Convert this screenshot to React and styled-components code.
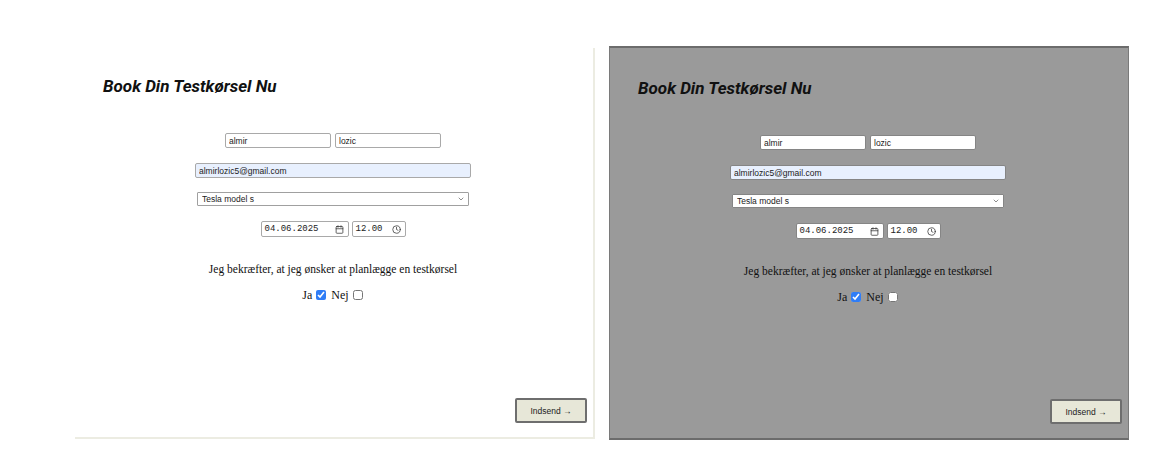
import React from "react";
import styled, { createGlobalStyle } from "styled-components";
import { ChevronDown, Calendar, Clock } from "lucide-react";

const GlobalStyle = createGlobalStyle`
  body {
    margin: 0;
    background: #ffffff;
    font-family: "Liberation Serif", serif;
  }
`;

const Page = styled.div`
  display: flex;
  gap: 16px;
  padding: 46px 0 0 73px;
  align-items: flex-start;
`;

const Panel = styled.div`
  box-sizing: border-box;
  width: 520px;
  height: ${(p) => (p.$dark ? "394px" : "391px")};
  display: flex;
  flex-direction: column;
  padding: ${(p) => (p.$dark ? "30px 6px 14px 28px" : "30px 6px 14px 30px")};
  background: ${(p) => (p.$dark ? "#9a9a9a" : "#ffffff")};
  border: ${(p) => (p.$dark ? "1px solid #7a7a7a" : "none")};
  border-top: ${(p) => (p.$dark ? "2px solid #6c6c6c" : "none")};
  border-bottom: ${(p) => (p.$dark ? "2px solid #6c6c6c" : "none")};
  box-shadow: ${(p) => (p.$dark ? "none" : "2px 2px 0 #ecece2")};
`;

const Title = styled.h2`
  margin: 0;
  font-family: Roboto, "Liberation Sans", sans-serif;
  font-style: italic;
  font-weight: 700;
  font-size: 17px;
  line-height: 20px;
  color: #111;
`;

const Form = styled.div`
  display: flex;
  flex-direction: column;
  align-items: center;
  margin: 37px 24px 0 0;
`;

const Row = styled.div`
  display: flex;
  gap: ${(p) => p.$gap || 4}px;
  margin-bottom: ${(p) => p.$mb || 0}px;
`;

const Field = styled.input`
  box-sizing: border-box;
  display: block;
  width: ${(p) => p.$w}px;
  height: 15px;
  padding: 0 3px;
  font-family: "Liberation Sans", Arial, sans-serif;
  font-size: 8.5px;
  color: #222;
  background: ${(p) => (p.$filled ? "#e8f0fe" : "#fff")};
  border: 1px solid ${(p) => (p.$dark ? "#858585" : "#a9a9a9")};
  border-radius: 2px;
  outline: none;
`;

const SelectWrap = styled.div`
  position: relative;
  width: 272px;
  height: 14px;
`;

const Select = styled.select`
  box-sizing: border-box;
  display: block;
  width: 100%;
  height: 14px;
  padding: 0 4px;
  appearance: none;
  font-family: "Liberation Sans", Arial, sans-serif;
  font-size: 8.5px;
  line-height: 12px;
  color: #222;
  background: #fff;
  border: 1px solid ${(p) => (p.$dark ? "#858585" : "#a0a0a0")};
  border-radius: 1px;
  outline: none;
`;

const Chevron = styled(ChevronDown)`
  position: absolute;
  right: 4px;
  top: 3px;
  display: block;
  width: 8px;
  height: 8px;
  color: #555;
  pointer-events: none;
`;

const PickerBox = styled.div`
  box-sizing: border-box;
  display: flex;
  align-items: center;
  justify-content: space-between;
  width: ${(p) => p.$w}px;
  height: 16px;
  padding: 0 4px 0 3px;
  font-family: "Liberation Mono", "DejaVu Sans Mono", monospace;
  font-size: 9px;
  color: #222;
  background: #fff;
  border: 1px solid ${(p) => (p.$dark ? "#858585" : "#a9a9a9")};
  border-radius: 2px;

  svg {
    display: block;
    width: 9px;
    height: 9px;
    color: #333;
  }
`;

const Confirm = styled.p`
  margin: 25px 0 0;
  font-size: 11.5px;
  line-height: 14px;
  color: #111;
`;

const Choices = styled.div`
  display: flex;
  align-items: center;
  gap: 4px;
  margin-top: 12px;
  font-size: 12px;
  line-height: 14px;
  color: #111;
`;

const Check = styled.input`
  width: 10px;
  height: 10px;
  margin: 0 1px 0 0;
  accent-color: #2f7df6;
`;

const Footer = styled.div`
  display: flex;
  justify-content: flex-end;
  margin-top: auto;
`;

const Submit = styled.button`
  box-sizing: border-box;
  width: 72px;
  height: 25px;
  padding: 0;
  font-family: "Liberation Sans", Arial, sans-serif;
  font-size: 8.5px;
  color: #222;
  background: #e7e7d8;
  border: 2px solid #6e6e6e;
  border-radius: 2px;
`;

const BookingPanel = ({ dark }) => (
  <Panel $dark={dark}>
    <Title>Book Din Testkørsel Nu</Title>
    <Form>
      <Row $mb={15}>
        <Field $w={106} $dark={dark} defaultValue="almir" />
        <Field $w={106} $dark={dark} defaultValue="lozic" />
      </Row>
      <Row $mb={14}>
        <Field $w={276} $dark={dark} $filled defaultValue="almirlozic5@gmail.com" />
      </Row>
      <Row $mb={15}>
        <SelectWrap>
          <Select $dark={dark} defaultValue="s">
            <option value="s">Tesla model s</option>
            <option value="3">Tesla model 3</option>
            <option value="x">Tesla model x</option>
          </Select>
          <Chevron />
        </SelectWrap>
      </Row>
      <Row $gap={3}>
        <PickerBox $w={88} $dark={dark}>
          <span>04.06.2025</span>
          <Calendar />
        </PickerBox>
        <PickerBox $w={54} $dark={dark}>
          <span>12.00</span>
          <Clock />
        </PickerBox>
      </Row>
      <Confirm>Jeg bekræfter, at jeg ønsker at planlægge en testkørsel</Confirm>
      <Choices>
        <span>Ja</span>
        <Check type="checkbox" defaultChecked />
        <span>Nej</span>
        <Check type="checkbox" />
      </Choices>
    </Form>
    <Footer>
      <Submit>Indsend →</Submit>
    </Footer>
  </Panel>
);

export default function App() {
  return (
    <>
      <GlobalStyle />
      <Page>
        <BookingPanel />
        <BookingPanel dark />
      </Page>
    </>
  );
}
